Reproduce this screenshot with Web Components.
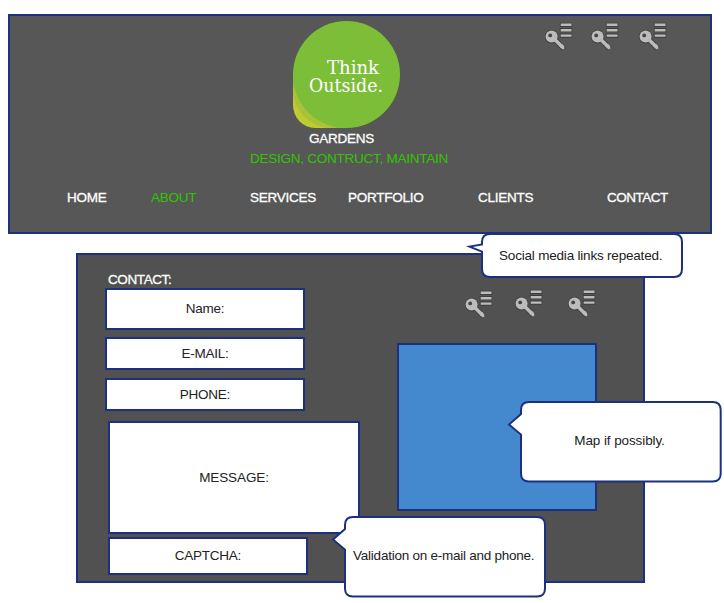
<!DOCTYPE html>
<html lang="en">
<head>
<meta charset="utf-8">
<title>Gardens – Contact</title>
<style>
html,body{margin:0;background:#fff}
body{width:724px;height:603px;overflow:hidden;font:13.5px/16px "Liberation Sans",Arial,sans-serif;letter-spacing:-.25px;color:#222;--line:#1b3180}
</style>
</head>
<body>
<wire-page></wire-page>
<script>
function define(name, html, setup){
  customElements.define(name, class extends HTMLElement{
    constructor(){
      super();
      const t=document.createElement('template');
      t.innerHTML=html;
      this.attachShadow({mode:'open'}).append(t.content.cloneNode(true));
    }
    connectedCallback(){ if(setup) setup(this,this.shadowRoot); }
  });
}

define('key-icon',`<style>:host{display:block;width:28px;height:29px}svg{display:block;overflow:visible}</style>
<svg width="28" height="29" viewBox="0 0 28 29">
  <g fill="none" stroke="#3f3f3f">
    <path stroke-width="4.2" d="M14.9 2.8H27.2M14.9 8.2H27.2M14.9 13.6H27.2"/>
    <path stroke-width="5.4" stroke-linecap="round" d="M10 17.5L17.6 25.4"/>
  </g>
  <circle cx="6.6" cy="14.6" r="6.8" fill="#3f3f3f"/>
  <path fill="none" stroke="#bcbcbc" stroke-width="2.4" d="M15.7 2.8H26.5M15.7 8.2H26.5M15.7 13.6H26.5"/>
  <path fill="none" stroke="#bcbcbc" stroke-width="3.5" d="M9.3 17L17.1 24.8"/>
  <path fill="#bcbcbc" d="M14.5 24.6L17 21.8L19.3 24.3V27.3H17.2Z"/>
  <circle cx="6.6" cy="14.6" r="6" fill="#bcbcbc"/>
  <circle cx="5.2" cy="13.4" r="1.9" fill="#444"/>
</svg>`);

define('garden-logo',`<style>:host{display:block;width:107px;height:107px}svg{display:block}
text{font-family:"DejaVu Serif",serif;font-size:18.5px;letter-spacing:0;fill:#fff}</style>
<svg width="107" height="107" viewBox="0 0 107 107">
  <path fill="#becb32" d="M0 53.5V84A22 23 0 0 0 22 107H53.5Z"/>
  <path fill="#a9c238" d="M0 53.5V74Q6 101 33 107H53.5Z"/>
  <path fill="#91ba3a" d="M0 53.5V63Q9 99 45 107H53.5Z"/>
  <circle cx="53.5" cy="53.5" r="53.5" fill="#7dbe38"/>
  <text x="34" y="53.4" textLength="52" lengthAdjust="spacingAndGlyphs">Think</text>
  <text x="16" y="70.6" textLength="74" lengthAdjust="spacingAndGlyphs">Outside.</text>
</svg>`);

define('white-label',`<style>:host{display:block;color:#fff;-webkit-text-stroke:.3px #fff;white-space:nowrap}
:host([active]){color:#33c400;-webkit-text-stroke:0}</style><slot></slot>`);

define('site-header',`<style>
:host{display:grid;grid-template-rows:114.5px 20px 39px 1fr;box-sizing:border-box;width:704px;height:220px;border:2px solid var(--line);background:#575757}
.top{display:grid;grid-template-columns:283px 1fr auto;padding:5px 43px 0 0}
.social{display:flex;gap:18px;padding-top:1px}
.social key-icon:last-child{margin-left:2px}
white-label.name{margin-left:299px}
white-label.tag{margin-left:240px}
nav{display:grid;grid-template-columns:84px 99px 98px 130px 129px auto;padding-left:57px}
nav white-label:last-child{letter-spacing:-.5px}
</style>
<div class="top"><span></span><garden-logo></garden-logo><div class="social"><key-icon></key-icon><key-icon></key-icon><key-icon></key-icon></div></div>
<white-label class="name">GARDENS</white-label>
<white-label class="tag" active>DESIGN, CONTRUCT, MAINTAIN</white-label>
<nav><white-label>HOME</white-label><white-label active>ABOUT</white-label><white-label>SERVICES</white-label><white-label>PORTFOLIO</white-label><white-label>CLIENTS</white-label><white-label>CONTACT</white-label></nav>`);

define('form-field',`<style>:host{display:flex;align-items:center;justify-content:center;box-sizing:border-box;width:200px;height:33px;border:2px solid var(--line);background:#fff}</style><slot></slot>`);

define('contact-panel',`<style>
:host{display:flex;box-sizing:border-box;width:569px;height:330px;border:2px solid var(--line);background:#515151;padding:17px 0 0 27px}
form{width:292px;display:flex;flex-direction:column}
white-label{margin-left:3px;height:16px;letter-spacing:-.4px}
.name{height:42px;padding-bottom:1px}.mail{margin-top:7px}.phone{margin-top:8px}
.mail,.phone,.msg{padding-top:1px}
.msg{width:252px;height:113px;margin:10px 0 0 3px;letter-spacing:-.1px}
.cap{height:38px;margin:3px 0 0 3px}
.side{display:flex;flex-direction:column}
.social{display:flex;margin:17px 0 0 68px;height:56px}
.social key-icon:nth-child(1){margin:1px 22px 0 0}
.social key-icon:nth-child(2){margin-right:25px}
.map{box-sizing:border-box;width:200px;height:168px;border:2px solid var(--line);background:#4488ce;margin-top:-2px}
</style>
<form><white-label>CONTACT:</white-label>
<form-field class="name">Name:</form-field><form-field class="mail">E-MAIL:</form-field><form-field class="phone">PHONE:</form-field>
<form-field class="msg">MESSAGE:</form-field><form-field class="cap">CAPTCHA:</form-field></form>
<div class="side"><div class="social"><key-icon></key-icon><key-icon></key-icon><key-icon></key-icon></div><div class="map"></div></div>`);

/* Speech bubble. shape = width, height, pointer tip x, pointer tip y, upper and lower base y of the pointer. */
define('note-bubble',`<style>
:host{position:absolute;display:flex;align-items:center;justify-content:center;white-space:nowrap;isolation:isolate}
span{margin-left:-2px}
svg{position:absolute;inset:0;overflow:visible;z-index:-1}</style>
<svg><path fill="#fff" stroke="#1b3180" stroke-width="2"/></svg><span><slot></slot></span>`,(el,root)=>{
  const [w,h,tx,ty,a,b]=el.getAttribute('shape').split(' ').map(Number), r=8;
  el.style.width=w+'px'; el.style.height=h+'px';
  const s=root.querySelector('svg');
  s.setAttribute('width',w); s.setAttribute('height',h);
  s.firstElementChild.setAttribute('d',`M${r} 0H${w-r}Q${w} 0 ${w} ${r}V${h-r}Q${w} ${h} ${w-r} ${h}H${r}Q0 ${h} 0 ${h-r}V${b}L${tx} ${ty}L0 ${a}V${r}Q0 0 ${r} 0Z`);
});

define('wire-page',`<style>
:host{display:block;position:relative;box-sizing:border-box;width:724px;height:603px;padding:14px 0 0 8px}
contact-panel{margin:19px 0 0 68px}
.n1{left:481.7px;top:234.3px;letter-spacing:-.2px}.n2{left:520.7px;top:401.7px;letter-spacing:-.1px}.n3{left:344.7px;top:516.7px}
</style>
<site-header></site-header>
<contact-panel></contact-panel>
<note-bubble class="n1" shape="200 43 -12.5 12.6 10.4 17.6">Social media links repeated.</note-bubble>
<note-bubble class="n2" shape="199.7 79.6 -12 22.6 12 32.6">Map if possibly.</note-bubble>
<note-bubble class="n3" shape="200 79.6 -12 22.6 12 32.6">Validation on e-mail and phone.</note-bubble>`);
</script>
</body>
</html>
